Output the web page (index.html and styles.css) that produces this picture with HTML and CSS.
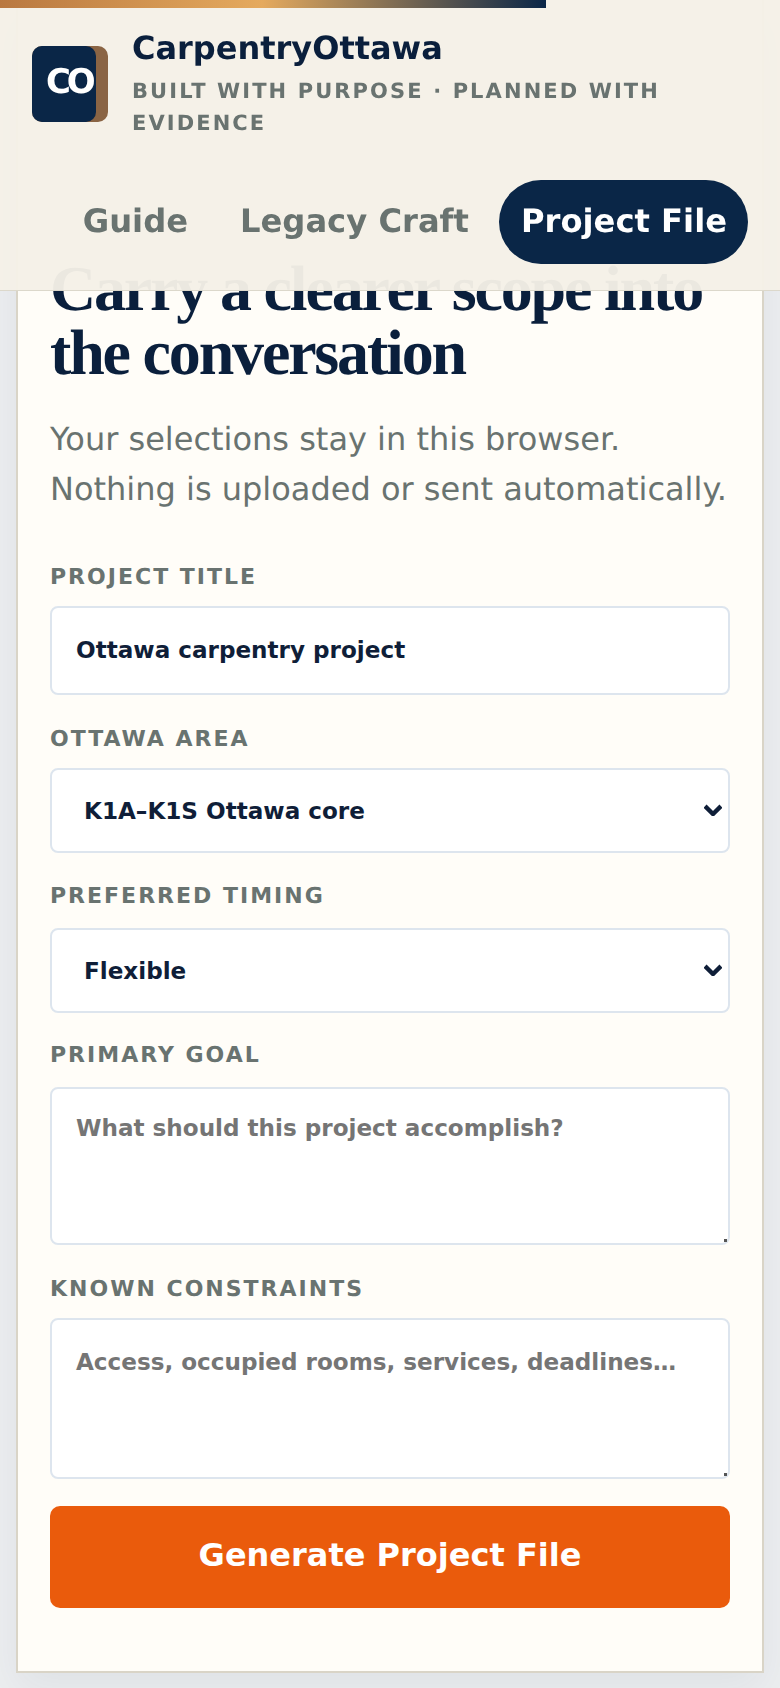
FILE: index.html
```html
<!DOCTYPE html>
<html lang="en">
<head>
<meta charset="utf-8">
<title>CarpentryOttawa – Project File</title>
<link rel="stylesheet" href="styles.css">
</head>
<body>
<div class="progress"></div>
<header class="site-header">
  <div class="brand">
    <div class="logo"><div class="logo-face"><span class="logo-text">CO</span></div></div>
    <div class="brand-copy">
      <div class="brand-name">CarpentryOttawa</div>
      <div class="brand-tag">Built with purpose · Planned with evidence</div>
    </div>
  </div>
  <nav class="nav">
    <a class="nav-link" href="#">Guide</a>
    <a class="nav-link" href="#">Legacy Craft</a>
    <a class="nav-link active" href="#">Project File</a>
  </nav>
</header>
<main class="page">
  <section class="card">
    <h1 class="title">Carry a clearer scope into the conversation</h1>
    <p class="lead">Your selections stay in this browser. Nothing is uploaded or sent automatically.</p>
    <form class="form">
      <label class="label label-1" for="title">Project title</label>
      <input class="control input" id="title" type="text" value="Ottawa carpentry project">

      <label class="label label-2" for="area">Ottawa area</label>
      <div class="select-wrap">
        <select class="control select" id="area"><option>K1A–K1S Ottawa core</option></select>
        <svg class="chevron" viewBox="0 0 18 12" aria-hidden="true"><path d="M1 2.2 9 10 17 2.2"/></svg>
      </div>

      <label class="label label-3" for="timing">Preferred timing</label>
      <div class="select-wrap">
        <select class="control select" id="timing"><option>Flexible</option></select>
        <svg class="chevron" viewBox="0 0 18 12" aria-hidden="true"><path d="M1 2.2 9 10 17 2.2"/></svg>
      </div>

      <label class="label label-4" for="goal">Primary goal</label>
      <div class="area-wrap">
        <textarea class="control area area-goal" id="goal" placeholder="What should this project accomplish?"></textarea>
      </div>

      <label class="label label-5" for="constraints">Known constraints</label>
      <div class="area-wrap">
        <textarea class="control area area-constraints" id="constraints" placeholder="Access, occupied rooms, services, deadlines…"></textarea>
      </div>

      <button class="submit" type="button">Generate Project File</button>
    </form>
  </section>
</main>
</body>
</html>
```
FILE: styles.css
```css
* { box-sizing: border-box; }
html, body { margin: 0; padding: 0; }
body {
  height: 1688px;
  overflow: hidden;
  background: #eceef0;
  font-family: "DejaVu Sans", sans-serif;
  color: #0f1e38;
  text-rendering: geometricPrecision;
}
.progress {
  position: fixed;
  top: 0;
  left: 0;
  z-index: 3;
  width: 70%;
  height: 8px;
  background: linear-gradient(90deg, #b97840 0%, #e5aa5e 48%, #0a2647 100%);
}
.site-header {
  position: fixed;
  top: 0;
  left: 0;
  right: 0;
  z-index: 2;
  height: 291px;
  padding: 28px 32px 0;
  background: rgba(245, 240, 231, 0.96);
  border-bottom: 1px solid #dcd8cb;
}
.brand { display: flex; align-items: flex-start; gap: 24px; }
.logo {
  flex: none;
  width: 76px;
  height: 76px;
  margin-top: 18px;
  border-radius: 10px;
  background: #8a6444;
}
.logo-face {
  width: 64px;
  height: 76px;
  border-radius: 10px;
  background: #0a2647;
  position: relative;
}
.logo-text {
  position: absolute;
  left: 14px;
  top: 16px;
  color: #fff;
  font-size: 34px;
  line-height: 40px;
  font-weight: 700;
  letter-spacing: -0.12em;
}
.brand-copy { min-width: 0; }
.brand-name {
  color: #0a1f3c;
  font-size: 32px;
  line-height: 40px;
  font-weight: 700;
}
.brand-tag {
  margin-top: 7px;
  color: #697370;
  font-size: 21px;
  line-height: 32px;
  font-weight: 700;
  letter-spacing: 0.1em;
  text-transform: uppercase;
}
.nav {
  display: flex;
  justify-content: flex-end;
  gap: 9px;
  margin-top: 41px;
}
.nav-link {
  height: 84px;
  padding: 0 21px 0 22px;
  border-radius: 42px;
  color: #697370;
  font-size: 32.2px;
  line-height: 82px;
  font-weight: 700;
  text-decoration: none;
}
.nav-link.active { background: #0a2647; color: #fff; }
.page { padding: 0 16px; }
.card {
  height: 1673px;
  padding: 257px 32px 0;
  background: #fffdf8;
  border: 2px solid #d9d4c7;
  border-top: 0;
  box-shadow: 0 16px 40px rgba(10, 38, 71, 0.06);
}
.title {
  margin: 0;
  color: #0a1f3c;
  font-family: "Liberation Serif", serif;
  font-size: 64px;
  line-height: 64px;
  font-weight: 700;
  letter-spacing: -0.034em;
}
.lead {
  margin: 29px 0 0;
  color: #697370;
  font-size: 32px;
  line-height: 50px;
}
.form { display: flex; flex-direction: column; margin-top: 46px; }
.label {
  color: #697370;
  font-size: 22px;
  line-height: 30px;
  font-weight: 700;
  letter-spacing: 2px;
  text-transform: uppercase;
}
.label-1 { margin-top: 3px; margin-bottom: 13px; }
.label-2 { margin-top: 30px; margin-bottom: 13px; }
.label-3 { margin-top: 29px; margin-bottom: 16px; }
.label-4 { margin-top: 28px; margin-bottom: 16px; }
.label-5 { margin-top: 30px; margin-bottom: 13px; }
.control {
  display: block;
  width: 100%;
  margin: 0;
  background: #fff;
  border: 2px solid #dde5ee;
  border-radius: 8px;
  color: #0f1e38;
  font-family: "DejaVu Sans", sans-serif;
  font-size: 23.1px;
  font-weight: 700;
  outline: 0;
}
.control::placeholder { color: #757575; opacity: 1; }
.input { height: 89px; padding: 0 24px 2px; }
.select-wrap, .area-wrap { position: relative; }
.select {
  height: 85px;
  padding: 0 60px 0 32px;
  appearance: none;
  -webkit-appearance: none;
}
.chevron {
  position: absolute;
  right: 8px;
  top: 36px;
  width: 18px;
  height: 12px;
  pointer-events: none;
}
.chevron path { fill: none; stroke: #0f1e38; stroke-width: 4.4; }
.area { padding: 22px 24px; line-height: 34px; resize: none; }
.area-goal { height: 158px; }
.area-constraints { height: 161px; padding-top: 25px; }
.area-wrap::after {
  content: "";
  position: absolute;
  right: 3px;
  bottom: 3px;
  width: 3px;
  height: 3px;
  background: #555;
}
.submit {
  display: block;
  width: 100%;
  height: 102px;
  margin-top: 27px;
  padding: 0 0 4px;
  background: #ea5b0c;
  border: 0;
  border-radius: 10px;
  color: #fff;
  font-family: "DejaVu Sans", sans-serif;
  font-size: 32px;
  font-weight: 700;
}
```
